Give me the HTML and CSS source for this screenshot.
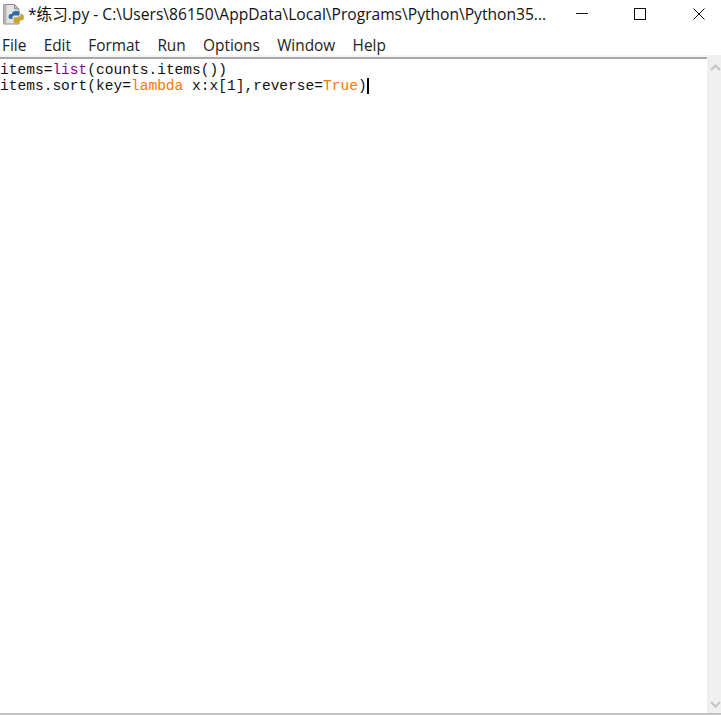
FILE: index.html
```html
<!DOCTYPE html>
<html lang="zh">
<head>
<meta charset="utf-8">
<title>练习.py</title>
<link rel="stylesheet" href="styles.css">
</head>
<body>
<div class="window">
  <header class="titlebar">
    <svg class="app-icon" width="22" height="22" viewBox="0 0 22 22">
      <path d="M1.500 1.500h11l4.500 4.500v15H1.500z" fill="#e4e4e4" stroke="#8c8c8c"/>
      <path d="M1.500 1.500h3v19.500h-3z" fill="#b4b4b4"/>
      <path d="M12.500 1.500v4.500h4.500z" fill="#c4c4c4" stroke="#8c8c8c"/>
      <path d="M14 8c-3 0-4 1-4 3H8.500c-2.500 0-2.500 5 0 5h2v-2c0-1 1-1.500 2-1.500h3c1.500 0 2-.8 2-2V9.500C17.500 8.500 16 8 14 8z" fill="#2f6aa8"/>
      <path d="M18.500 10.500v1.500c0 1.500-1 2.300-2.500 2.300h-3c-1 0-1.500.7-1.500 1.700v3c0 1.500 6 2 6 0v-1.500h2.500c2.500-.3 2.500-6.500 0-6.500z" fill="#c8a62e"/>
    </svg>
    <span class="title-text">*练习.py - C:\Users\86150\AppData\Local\Programs\Python\Python35...</span>
    <div class="controls">
      <svg class="ctl" width="12" height="12" viewBox="0 0 12 12"><path d="M0 5.500h12" stroke="#111" fill="none"/></svg>
      <svg class="ctl" width="12" height="12" viewBox="0 0 12 12"><rect x=".5" y=".5" width="11" height="11" stroke="#111" fill="none"/></svg>
      <svg class="ctl ctl-close" width="12" height="12" viewBox="0 0 12 12"><path d="M.5.500l11 11M11.500.5l-11 11" stroke="#111" fill="none"/></svg>
    </div>
  </header>
  <nav class="menubar">
    <span>File</span><span>Edit</span><span>Format</span><span>Run</span><span>Options</span><span>Window</span><span>Help</span>
  </nav>
  <main class="body">
    <div class="editor">
      <div class="line">items=<span class="builtin">list</span>(counts.items())</div>
      <div class="line">items.sort(key=<span class="keyword">lambda</span> x:x[1],reverse=<span class="keyword">True</span>)<span class="caret"></span></div>
    </div>
    <div class="scrollbar">
      <svg width="11" height="7" viewBox="0 0 11 7"><path d="M1 6l4.500-4.500L10 6" stroke="#c4c4c4" stroke-width="2" fill="none"/></svg>
      <svg width="11" height="7" viewBox="0 0 11 7"><path d="M1 1l4.500 4.500L10 1" stroke="#c4c4c4" stroke-width="2" fill="none"/></svg>
    </div>
  </main>
</div>
</body>
</html>
```
FILE: styles.css
```css
* { box-sizing: border-box; }
html, body { margin: 0; height: 100%; background: #fff; }
.window { width: 721px; height: 715px; display: flex; flex-direction: column; overflow: hidden; }
.titlebar { height: 26px; display: flex; align-items: center; padding-left: 2px; flex: none; }
.app-icon { flex: none; margin-top: 1px; }
.title-text { margin-left: 4px; font: 15.6px "Open Sans", "Noto Sans CJK SC", sans-serif; color: #111; white-space: nowrap; flex: none; }
.controls { margin-left: auto; display: flex; gap: 46px; padding: 2px 16px 0 0; }
.ctl-close { margin-left: 1px; }
.menubar { height: 29px; display: flex; gap: 17.3px; padding: 9px 0 0 2px; align-items: center; flex: none; font: 15.4px "Open Sans", sans-serif; color: #222; }
.body { flex: 1; display: flex; min-height: 0; background: #f5f5f5; border-bottom: 2px solid #c4c4c4; }
.editor { flex: 1; margin: 2px 1px 0 0; padding-top: 3px; background: #fff; border-top: 2px solid #a8a8a8; font: 14.55px/16px "Liberation Mono", monospace; color: #111; }
.line { height: 16px; white-space: pre; }
.builtin { color: #900090; }
.keyword { color: #ff7700; }
.caret { display: inline-block; width: 2px; height: 16px; background: #000; vertical-align: top; }
.scrollbar { width: 13px; flex: none; background: #f0f0f0; border-left: 1px solid #e8e8e8; display: flex; flex-direction: column; justify-content: space-between; align-items: center; padding: 9px 0 5px; }
```
